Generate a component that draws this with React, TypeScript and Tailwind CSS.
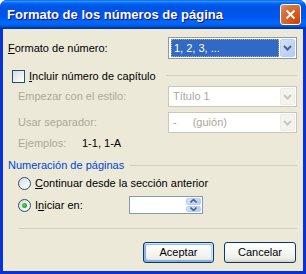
import React from "react";

const font = "font-['Liberation_Sans',Arial,sans-serif]";

function DropBtn({ disabled }: { disabled?: boolean }) {
  return (
    <div
      className={
        "w-[15px] h-full flex items-center justify-center rounded-[2px] border " +
        (disabled
          ? "border-[#ECEBE4] bg-[#F4F3EE]"
          : "border-[#BCCDF5] bg-[linear-gradient(135deg,#D6E2FD,#B2C8F9)]")
      }
    >
      <svg width="9" height="6" viewBox="0 0 9 6">
        <path
          d="M1 1 L4.5 4.5 L8 1"
          fill="none"
          stroke={disabled ? "#C9C7BA" : "#4D6185"}
          strokeWidth="2"
        />
      </svg>
    </div>
  );
}

function Select({
  children,
  disabled,
  h,
}: {
  children: React.ReactNode;
  disabled?: boolean;
  h: string;
}) {
  return (
    <div
      className={
        "w-[129px] flex items-stretch gap-[1px] p-[1px] border bg-white " +
        h +
        " " +
        (disabled ? "border-[#C9C7BA] bg-[#ECE9D8]" : "border-[#7F9DB9]")
      }
    >
      <div className="flex-1 flex items-center min-w-0">{children}</div>
      <DropBtn disabled={disabled} />
    </div>
  );
}

function Radio({ checked }: { checked?: boolean }) {
  return (
    <div className="w-[13px] h-[13px] rounded-full border border-[#1C5180] bg-[linear-gradient(135deg,#DCDCD7,#FFFFFF)] flex items-center justify-center">
      {checked && (
        <div className="w-[5px] h-[5px] rounded-full bg-[radial-gradient(circle_at_40%_40%,#55D551,#1A8F16)]" />
      )}
    </div>
  );
}

export default function App() {
  return (
    <div className={"w-[306px] h-[274px] " + font}>
      <div className="w-[306px] h-[274px] flex flex-col rounded-t-[7px] bg-[#0831D9] overflow-hidden">
        <div className="h-[29px] shrink-0 flex items-center justify-between pl-[7px] pr-[5px] bg-[linear-gradient(to_bottom,#0058EE_0%,#3593FF_4%,#288EFF_6%,#127DFF_8%,#036FFC_10%,#0262EE_14%,#0057E5_20%,#0054E3_24%,#0055EB_56%,#005BF5_66%,#026AFE_76%,#0062EF_86%,#0052D6_92%,#0040AB_94%,#003092_100%)]">
          <span className="text-white font-bold text-[13px] [text-shadow:1px_1px_#0F1089]">
            Formato de los números de página
          </span>
          <div className="w-[21px] h-[21px] rounded-[3px] border border-white bg-[radial-gradient(circle_at_90%_90%,#CC4600_0%,#DC6527_55%,#CD7546_70%,#E48659_90%)] flex items-center justify-center">
            <svg width="11" height="11" viewBox="0 0 11 11">
              <path d="M1.5 1.5 L9.5 9.5 M9.5 1.5 L1.5 9.5" stroke="white" strokeWidth="2" />
            </svg>
          </div>
        </div>
        <div className="flex-1 mx-[3px] mb-[3px] bg-[#ECE9D8] text-[11px] text-black flex flex-col pl-[5px] pr-[6px]">
          {/* Formato de número */}
          <div className="mt-[8px] h-[22px] flex items-center justify-between">
            <span>
              <u>F</u>ormato de número:
            </span>
            <Select h="h-[22px]">
              <div className="ml-[1px] h-[18px] flex-1 bg-[#316AC5] border border-dotted border-[#C9A55A] text-white flex items-center pl-[2px]">
                1, 2, 3, ...
              </div>
            </Select>
          </div>
          {/* Incluir */}
          <div className="mt-[11px] h-[13px] flex items-center">
            <div className="ml-[4px] w-[13px] h-[13px] border border-[#1C5180] bg-[linear-gradient(135deg,#DCDCD7,#FFFFFF)]" />
            <span className="ml-[4px]">
              <u>I</u>ncluir número de capítulo
            </span>
            <div className="ml-auto w-[131px] h-px bg-[#D0D0BF] mt-[-2px]" />
          </div>
          {/* Empezar */}
          <div className="mt-[3px] h-[21px] flex items-center justify-between text-[#ACA899]">
            <span className="ml-[10px]">Empezar con el estilo:</span>
            <Select h="h-[21px]" disabled>
              <span className="pl-[3px] text-[#ACA899]">Título 1</span>
            </Select>
          </div>
          {/* Usar separador */}
          <div className="mt-[5px] h-[21px] flex items-center justify-between text-[#ACA899]">
            <span className="ml-[10px]">Usar separador:</span>
            <Select h="h-[21px]" disabled>
              <span className="pl-[3px] text-[#ACA899]">-</span>
              <span className="pl-[16px] text-[#ACA899]">(guión)</span>
            </Select>
          </div>
          {/* Ejemplos */}
          <div className="mt-[3px] h-[14px] flex items-center">
            <span className="ml-[10px] w-[64px] text-[#ACA899]">Ejemplos:</span>
            <span>1-1, 1-A</span>
          </div>
          {/* Numeración */}
          <div className="mt-[8px] h-[14px] flex items-center">
            <span className="text-[#0046D5]">Numeración de páginas</span>
            <div className="ml-[6px] flex-1 h-px bg-[#D0D0BF]" />
          </div>
          {/* radio 1 */}
          <div className="mt-[4px] h-[14px] flex items-center">
            <div className="ml-[10px]">
              <Radio />
            </div>
            <span className="ml-[4px]">
              <u>C</u>ontinuar desde la sección anterior
            </span>
          </div>
          {/* radio 2 */}
          <div className="mt-[6px] h-[18px] flex items-center">
            <div className="ml-[10px]">
              <Radio checked />
            </div>
            <span className="ml-[4px] w-[94px]">
              I<u>n</u>iciar en:
            </span>
            <div className="w-[74px] h-[18px] border border-[#7F9DB9] bg-white flex justify-end p-[1px]">
              <div className="w-[15px] flex flex-col gap-[1px]">
                <div className="flex-1 rounded-[2px] border border-[#BCCDF5] bg-[linear-gradient(135deg,#D6E2FD,#B2C8F9)] flex items-center justify-center">
                  <svg width="7" height="4" viewBox="0 0 7 4">
                    <path d="M0.5 3.5 L3.5 0.5 L6.5 3.5" fill="none" stroke="#4D6185" strokeWidth="1.6" />
                  </svg>
                </div>
                <div className="flex-1 rounded-[2px] border border-[#BCCDF5] bg-[linear-gradient(135deg,#D6E2FD,#B2C8F9)] flex items-center justify-center">
                  <svg width="7" height="4" viewBox="0 0 7 4">
                    <path d="M0.5 0.5 L3.5 3.5 L6.5 0.5" fill="none" stroke="#4D6185" strokeWidth="1.6" />
                  </svg>
                </div>
              </div>
            </div>
          </div>
          {/* separator */}
          <div className="mt-[14px] ml-[11px] h-px bg-[#D0D0BF]" />
          {/* buttons */}
          <div className="mt-[13px] flex justify-end gap-[10px] pr-[1px]">
            <button className="w-[71px] h-[21px] rounded-[3px] border border-[#003C74] bg-[linear-gradient(to_bottom,#FFFFFF,#F0F0EA_80%,#D6D0C5)] shadow-[inset_-1px_1px_#CEE7FF,inset_1px_2px_#98B8EA,inset_-2px_2px_#BCD4F6,inset_1px_-1px_#89ADE4,inset_2px_-2px_#89ADE4] text-[11px] text-black">
              Aceptar
            </button>
            <button className="w-[72px] h-[21px] rounded-[3px] border border-[#003C74] bg-[linear-gradient(to_bottom,#FFFFFF,#F0F0EA_80%,#D6D0C5)] text-[11px] text-black">
              Cancelar
            </button>
          </div>
        </div>
      </div>
    </div>
  );
}
